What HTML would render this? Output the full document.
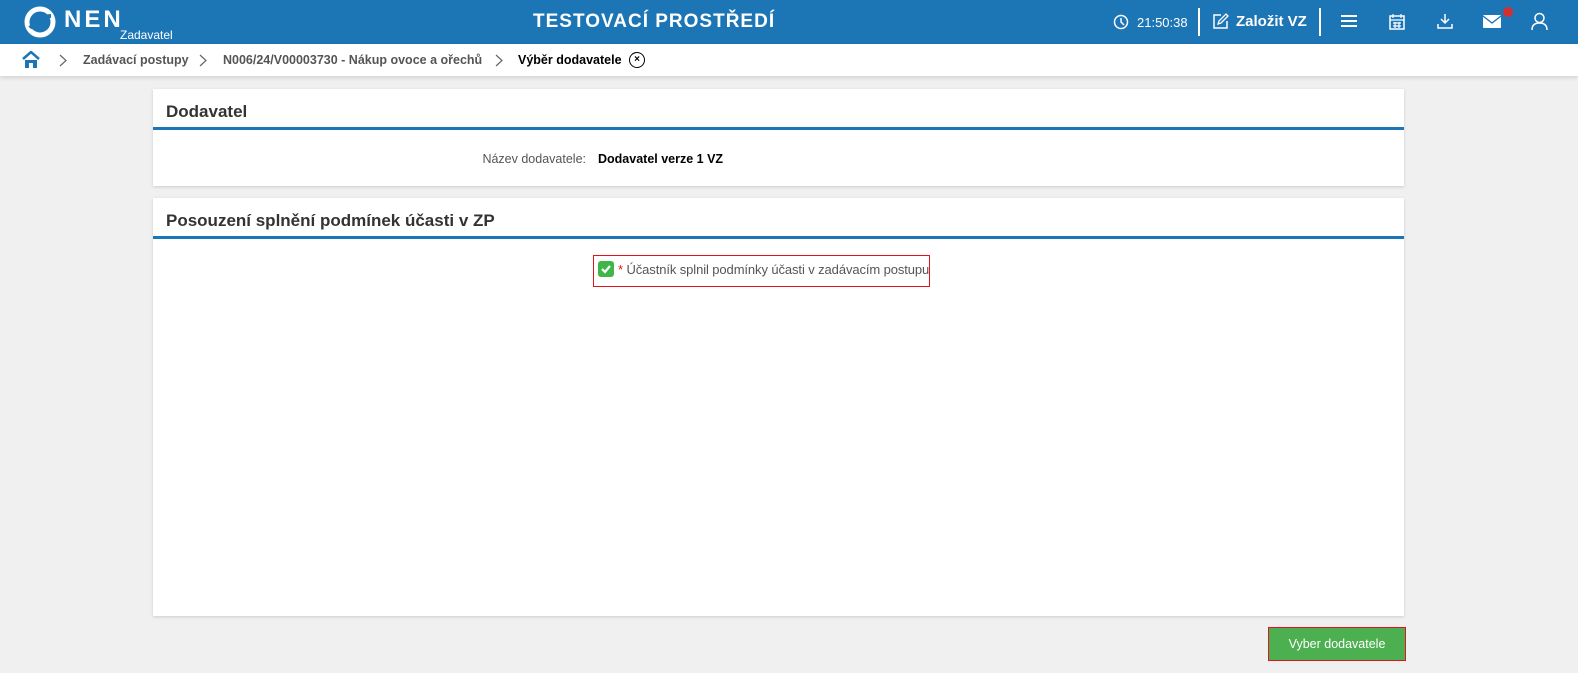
<!DOCTYPE html>
<html><head><meta charset="utf-8"><style>
*{box-sizing:border-box;margin:0;padding:0}
body{width:1578px;height:673px;background:#f0f0f0;font-family:"Liberation Sans",Arial,sans-serif;position:relative;overflow:hidden}
.top{position:absolute;left:0;top:0;width:1578px;height:44px;background:#1c75b5;color:#fff}
.bc{position:absolute;left:0;top:44px;width:1578px;height:32px;background:#fff;box-shadow:0 2px 4px rgba(0,0,0,.12);font-size:12px;color:#555;font-weight:bold}
.bc span{position:absolute;top:9px;white-space:nowrap}
.bc svg.ch{position:absolute;top:10px}
.card{position:absolute;left:153px;width:1251px;background:#fff;box-shadow:0 1px 3px rgba(0,0,0,.15)}
.card h2{font-size:17px;color:#333;padding:13px 13px 0;height:41px;border-bottom:3px solid #1c75b5}
.sep{position:absolute;top:8px;width:2px;height:28px;background:#fff}
</style></head><body>
<div class="top">
<svg style="position:absolute;left:24px;top:6px" width="32" height="32" viewBox="0 0 32 32"><circle cx="16" cy="16" r="13" fill="none" stroke="#fff" stroke-width="5"/><path d="M6 22 Q16 10 27 10" stroke="#1c75b5" stroke-width="4" fill="none"/></svg>
<div style="position:absolute;left:64px;top:6px;font-size:24px;font-weight:bold;letter-spacing:3px">NEN</div>
<div style="position:absolute;left:120px;top:28px;font-size:12px">Zadavatel</div>
<div style="position:absolute;left:533px;top:11px;font-size:19px;font-weight:bold;letter-spacing:1px">TESTOVACÍ PROSTŘEDÍ</div>
<svg style="position:absolute;left:1113px;top:14px" width="16" height="16" viewBox="0 0 16 16"><circle cx="8" cy="8" r="6.5" fill="none" stroke="#fff" stroke-width="1.5"/><path d="M8 4v4l3 3" stroke="#fff" stroke-width="1.5" fill="none"/></svg>
<div style="position:absolute;left:1137px;top:15px;font-size:13px">21:50:38</div>
<div class="sep" style="left:1198px"></div>
<svg style="position:absolute;left:1212px;top:13px" width="17" height="17" viewBox="0 0 17 17"><path d="M9 2H2v13h13V8" fill="none" stroke="#fff" stroke-width="1.5"/><path d="M6 11l1-3 7-7 2 2-7 7z" fill="none" stroke="#fff" stroke-width="1.3"/></svg>
<div style="position:absolute;left:1236px;top:13px;font-size:15px;font-weight:bold">Založit VZ</div>
<div class="sep" style="left:1319px"></div>
<svg style="position:absolute;left:1341px;top:14px" width="16" height="14"><path d="M0 2h16M0 7h16M0 12h16" stroke="#fff" stroke-width="2"/></svg>
<svg style="position:absolute;left:1389px;top:13px" width="16" height="17" viewBox="0 0 16 17"><rect x="1" y="3" width="14" height="13" fill="none" stroke="#fff" stroke-width="1.5"/><path d="M4 1v4M12 1v4M1 7h14M4 10h8M4 13h8M6 9v6M10 9v6" stroke="#fff" stroke-width="1.2"/></svg>
<svg style="position:absolute;left:1437px;top:13px" width="16" height="17" viewBox="0 0 16 17"><path d="M8 1v9M4 6l4 4 4-4M1 11v4h14v-4" stroke="#fff" stroke-width="1.5" fill="none"/></svg>
<svg style="position:absolute;left:1483px;top:15px" width="18" height="13"><rect width="18" height="13" rx="1" fill="#fff"/><path d="M0 1l9 7 9-7" stroke="#1c75b5" stroke-width="1.3" fill="none"/></svg>
<div style="position:absolute;left:1503px;top:7px;width:10px;height:10px;border-radius:50%;background:#d32f2f"></div>
<svg style="position:absolute;left:1531px;top:12px" width="17" height="19" viewBox="0 0 17 19"><circle cx="8.5" cy="6" r="4.5" fill="none" stroke="#fff" stroke-width="1.5"/><path d="M1 18q0-7 7.5-7t7.5 7" fill="none" stroke="#fff" stroke-width="1.5"/></svg>
</div>
<div class="bc">
<svg style="position:absolute;left:22px;top:7px" width="18" height="17" viewBox="0 0 18 17"><path d="M1 8L9 1l8 7" stroke="#1c75b5" stroke-width="2.5" fill="none"/><path d="M3 9h12v8h-4v-5H7v5H3z" fill="#1c75b5"/></svg>
<svg class="ch" style="left:59px" width="8" height="13"><path d="M1 1l6 5.5L1 12" stroke="#666" stroke-width="1.2" fill="none"/></svg>
<span style="left:83px;font-size:12.5px">Zadávací postupy</span>
<svg class="ch" style="left:199px" width="8" height="13"><path d="M1 1l6 5.5L1 12" stroke="#666" stroke-width="1.2" fill="none"/></svg>
<span style="left:223px;font-size:12.5px">N006/24/V00003730 - Nákup ovoce a ořechů</span>
<svg class="ch" style="left:495px" width="8" height="13"><path d="M1 1l6 5.5L1 12" stroke="#666" stroke-width="1.2" fill="none"/></svg>
<span style="left:518px;color:#000;font-size:12.5px">Výběr dodavatele</span>
<div style="position:absolute;left:629px;top:8px;width:16px;height:16px;border:1.3px solid #000;border-radius:50%;font-size:10px;color:#000;text-align:center;line-height:13px">×</div>
</div>
<div class="card" style="top:89px;height:97px">
<h2>Dodavatel</h2>
<div style="position:absolute;left:0;width:433px;top:63px;text-align:right;font-size:12.5px;color:#555">Název dodavatele:</div>
<div style="position:absolute;left:445px;top:63px;font-size:12.5px;font-weight:bold;color:#000">Dodavatel verze 1 VZ</div>
</div>
<div class="card" style="top:198px;height:418px">
<h2>Posouzení splnění podmínek účasti v ZP</h2>
<div style="position:absolute;left:440px;top:57px;width:337px;height:32px;border:1px solid #e0141e"></div>
<div style="position:absolute;left:445px;top:63px;width:16px;height:16px;border-radius:3px;background:#3eb649"><svg width="16" height="16"><path d="M4 8l3 3 5-6" stroke="#fff" stroke-width="2.2" fill="none"/></svg></div>
<div style="position:absolute;left:465px;top:64px;font-size:13px;color:#555;letter-spacing:-0.1px"><span style="color:#e0141e">*</span> Účastník splnil podmínky účasti v zadávacím postupu</div>
</div>
<div style="position:absolute;left:1268px;top:627px;width:138px;height:34px;border:1px solid #e0141e;background:#4caf50;color:#fff;font-size:12.5px;text-align:center;line-height:32px">Vyber dodavatele</div>
</body></html>
